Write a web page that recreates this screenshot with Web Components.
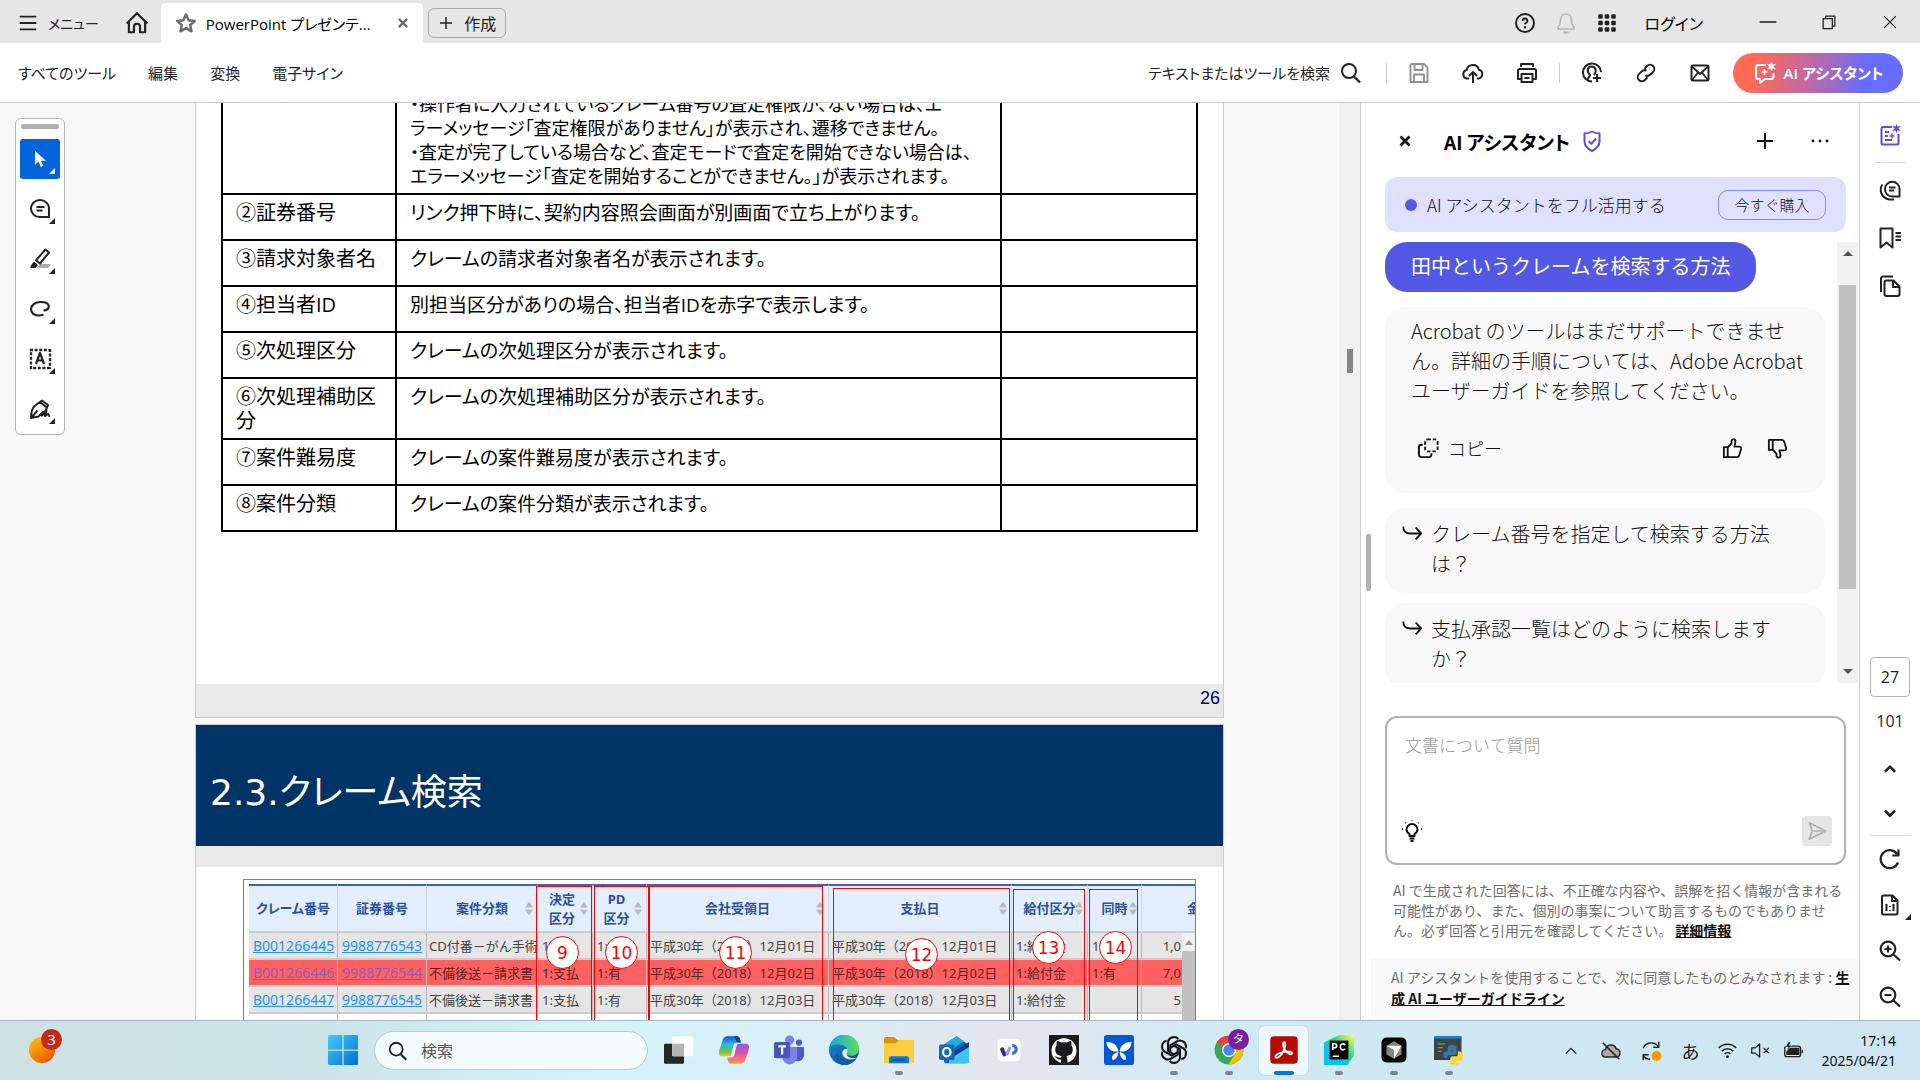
<!DOCTYPE html>
<html lang="ja">
<head>
<meta charset="utf-8">
<title>PowerPoint プレゼンテーション</title>
<style>
html,body{margin:0;height:100%;overflow:hidden}
body{font-family:"Open Sans","Noto Sans CJK JP",sans-serif;font-size:16px;color:#222;background:#fff}
</style>
</head>
<body>
<acro-app></acro-app>
<script>
const ICONS = {
menu:'<path d="M3 5h18M3 12h18M3 19h18" stroke-width="2"/>',
home:'<path d="M2.5 12.5 12 3l9.500 9.500M4.500 11v9.500h4.700v-5a2.800 2.800 0 0 1 5.600 0v5h4.700V11" stroke-width="2"/>',
star:'<path d="m12 3.500 2.600 5.700 6.200.7-4.600 4.200 1.300 6.200L12 17.200l-5.500 3.100 1.300-6.200-4.600-4.200 6.200-.7z" stroke-width="2.500"/>',
x:'<path d="m7.500 7.500 9 9m0-9-9 9" stroke-width="2.600"/>',
plus:'<path d="M12 4v16M4 12h16" stroke-width="2"/>',
help:'<circle cx="12" cy="12" r="9" stroke-width="2"/><path d="M9.700 9.800a2.300 2.300 0 1 1 3.200 2.100c-.7.300-.9.600-.9 1.300" stroke-width="2"/><circle cx="12" cy="16.300" r="1.200" fill="currentColor" stroke="none"/>',
bell:'<path d="M12 3c-3.500 0-5.500 2.500-5.500 6 0 4-1 5.500-2.500 7.500V18h16v-1.500c-1.500-2-2.500-3.500-2.500-7.500 0-3.500-2-6-5.500-6z" stroke-width="1.700"/><path d="M10 20.500a2.200 2.200 0 0 0 4 0" stroke-width="2"/>',
grid:'<path stroke-width="2.600" d="M4.500 4.500h2v2h-2zM11 4.500h2v2h-2zM17.500 4.500h2v2h-2zM4.500 11h2v2h-2zM11 11h2v2h-2zM17.500 11h2v2h-2zM4.500 17.500h2v2h-2zM11 17.500h2v2h-2zM17.500 17.500h2v2h-2z"/>',
min:'<path d="M2 12h20" stroke-width="1.900"/>',
restore:'<path d="M5 8h11v12H5zM8 8V5h11v12h-3" stroke-width="1.500"/>',
close:'<path d="m5 5 14 14m0-14L5 19" stroke-width="1.500"/>',
search:'<circle cx="10" cy="10" r="7" stroke-width="2"/><path d="m15 15.500 6 6" stroke-width="2.400"/>',
save:'<path d="M4.500 3h12.500l3.500 3.500v14.500h-17V4z" stroke-width="1.900"/><path d="M7.500 3v6h8V3M7 21v-7.500h10V21" stroke-width="1.900"/>',
cloud:'<path d="M8 17.500H6.500a4.300 4.300 0 0 1-.8-8.500 6.300 6.300 0 0 1 12.200-.3 4.500 4.500 0 0 1-.4 8.800H16M12 22V11m-4 4 4-4 4 4" stroke-width="2"/>',
print:'<path d="M6 6V3h12v3M6 18H3V9.500A1.500 1.500 0 0 1 4.500 8h15A1.500 1.500 0 0 1 21 9.500V18h-3M6.500 13h11v8h-11zM9.500 17h5M4 8h16" stroke-width="2"/>',
person:'<path d="M21 11a9 9 0 1 0-9 9.500M8 18.500c0-2.500 2-2.500 2-4.500-4-4-2-8.500 1.500-8.500S17.500 9 14 14M17 13v8m-4-4h8" stroke-width="2"/>',
link:'<g transform="rotate(-45 12 12)" stroke-width="2"><path d="M10 16.200H6.200a4.200 4.200 0 0 1 0-8.400H10a4.200 4.200 0 0 1 4 3M14 7.800h3.800a4.200 4.200 0 0 1 0 8.400H14a4.200 4.200 0 0 1-4-3"/></g>',
mail:'<rect x="3.500" y="4.500" width="17" height="15" rx="1.500" stroke-width="2"/><path d="m4 5.500 8 7.500 8-7.500M4 19l6-7.500m10 7.500-6-7.500" stroke-width="1.800"/>',
ai:'<path d="M13 4H5.500A2.500 2.500 0 0 0 3 6.500v9A2.500 2.500 0 0 0 5.500 18H7v4l5-4h6a2.500 2.500 0 0 0 2.500-2.500V12" stroke-width="2"/><path d="m18.500 1 .9 2.800 3.100-.8-2.100 2.500 2.100 2.500-3.100-.8-.9 2.800-.9-2.800-3.100.8 2.100-2.500L14.500 3l3.100.8zM11.500 8l.8 2.200 2.200.8-2.200.8-.8 2.200-.8-2.200-2.200-.8 2.200-.8z" fill="currentColor" stroke-width=".5"/>',
arrow:'<path d="M6 2v17l4.200-4 2.800 6.500 3-1.300-2.800-6.200H19z" fill="currentColor" stroke="none"/>',
note:'<path d="M3 11.500a9 8.500 0 1 1 18 0V20H11.500A8.500 8.500 0 0 1 3 11.500z" stroke-width="2"/><path d="M8.500 10h8M8.500 13.500h6" stroke-width="1.800"/>',
marker:'<path d="M9 21h11l3-4H12z" fill="#a8a8a8" stroke="none"/><path d="M17.500 2.500 21 5.500 12 16.500l-4-3.200z" stroke-width="2"/><path d="m6 14.500 4 3.500-2.500 3H2.500C2 19 4 17 6 14.500z" fill="currentColor" stroke="none"/>',
lasso:'<path d="M15.500 13.500c3.500-.2 5.500-2 5.300-4.300C20.500 6.300 16.500 5 12.500 5 7 5 3 8.300 3 12.200 3 16 6.500 18.500 11 18.500c1.800 0 3.300-.4 4.500-1" stroke-width="2.200"/>',
textbox:'<path d="M2 3h20M22 2v20M22 21H2M3 22V2" stroke-width="2.400" stroke-dasharray="3 1.600"/><path d="M8 17l4-11 4 11M9.200 13.500h5.600" stroke-width="2.200"/>',
sign:'<path d="M14 3.500 20 8l-2.500 6c-3 .5-4.500 3-7 5.500L3 21c0-5 .5-9 3.500-12zM3.500 20.500l6-7M11.500 4.500 18 10M13 19c2-1 3.500-3 5.500-5-1 2.500-2 4-1.500 5s2-2.500 3-2 .5 2.500 2 2" stroke-width="2"/>',
shield:'<path d="M12 2.500c2.500 1.500 5 2 7.500 2v8c0 5-3.500 7.500-7.500 9.500-4-2-7.500-4.500-7.500-9.500v-8c2.500 0 5-.5 7.500-2z" stroke-width="2"/><path d="m8.500 12 2.800 2.800L16 9.500" stroke-width="2"/>',
dots:'<g fill="currentColor" stroke="none"><circle cx="5" cy="12" r="1.400"/><circle cx="12" cy="12" r="1.400"/><circle cx="19" cy="12" r="1.400"/></g>',
copy:'<path d="M6 8H4.500A2.500 2.500 0 0 0 2 10.500v8A2.500 2.500 0 0 0 4.500 21h8a2.500 2.500 0 0 0 2.500-2.500V17" stroke-width="2"/><rect x="8.500" y="2.500" width="13" height="12.500" rx="2.500" stroke-width="2" stroke-dasharray="3.500 2"/>',
up:'<path d="M3 10.500h4V21H3zM7 11l4-4.500V4a2 2 0 0 1 4 1c0 2-.7 3.500-1 5h5a2 2 0 0 1 2 2.500l-2 6.500a2.500 2.500 0 0 1-2.500 2H7" stroke-width="1.900"/>',
down:'<path d="M3 13.500h4V3H3zM7 13l4 4.500V20a2 2 0 0 0 4-1c0-2-.7-3.500-1-5h5a2 2 0 0 0 2-2.500L19 5a2.500 2.500 0 0 0-2.500-2H7" stroke-width="1.900"/>',
reply:'<path d="M2.500 5c0 4.500 2.500 7.500 7 7.500h12M16 6l6 6.500-6 6.500" stroke-width="2"/>',
bulb:'<path d="M9.500 17v-2C7.500 13.800 6.500 12.500 6.500 10.500a5.500 5.500 0 0 1 11 0c0 2-1 3.300-3 4.500v2zM9.500 19.500h5M10.500 22h3" stroke-width="2"/><path d="M12 1.500v.6M5.500 3.500l.5.500M18.500 3.500l-.5.500M2 10h.8M22 10h-.8" stroke-width="2.200"/>',
send:'<path d="M3.500 3 21.500 12 3.500 21l3.500-9zM7 12h14" stroke-width="1.900"/>',
aidoc:'<path d="M14 4H5a1.500 1.500 0 0 0-1.500 1.500V20A1.500 1.500 0 0 0 5 21.500h14a1.500 1.500 0 0 0 1.500-1.500v-9M7 9h4M7 13h3M7 17h7" stroke-width="2"/><path d="m18.500 1 .9 2.800 3.100-.8-2.100 2.500 2.100 2.500-3.100-.8-.9 2.800-.9-2.800-3.100.8 2.100-2.500L14.500 3l3.100.8zM14 10l.8 2.200 2.200.8-2.200.8-.8 2.200-.8-2.200-2.200-.8 2.200-.8z" fill="currentColor" stroke-width=".3"/>',
comments:'<path d="M7 11a7.200 7.200 0 1 1 14.500 0v7.500h-7A7.300 7.300 0 0 1 7 11z" stroke-width="2"/><path d="M11 9.500h6.500M11 12.500h5M4.500 6.500c-3.500 4.500-2 13 6.500 15h5" stroke-width="2"/>',
bookmark:'<path d="M2.500 2.500h12v19l-6-5-6 5z" stroke-width="2"/><path d="M17.500 7H23M17.500 10.500H23M17.500 14H23" stroke-width="1.800"/>',
pages:'<path d="M3 18V4.500A2 2 0 0 1 5 2.500h10" stroke-width="2"/><path d="M8.500 6.500h7l6 6V20a2 2 0 0 1-2 2h-11a2 2 0 0 1-2-2V8.500a2 2 0 0 1 2-2zM15 7v6h6" stroke-width="2"/>',
chevup:'<path d="m6.500 15 5.500-5.500 5.500 5.500" stroke-width="2.800"/>',
chevdown:'<path d="m6.500 9.500 5.500 5.500 5.500-5.500" stroke-width="2.800"/>',
rotate:'<path d="M20 15.500A9 9 0 1 1 19 7M20.500 2.500V8.500h-6" stroke-width="2.200"/>',
actual:'<path d="M5.500 2.500h9l5 5V20a1.500 1.500 0 0 1-1.500 1.500H5.500A1.500 1.500 0 0 1 4 20V4a1.500 1.500 0 0 1 1.500-1.500zM14 3v5h5M7.500 12.500l1-.8V18M14.500 12.500l1-.8V18" stroke-width="2"/><path d="M12 13v1M12 17v1" stroke-width="1.800"/>',
zoomin:'<circle cx="10" cy="10" r="7.300" stroke-width="2.200"/><path d="m15.500 15.500 6.500 6M10 6.500v7M6.500 10h7" stroke-width="2.200"/>',
zoomout:'<circle cx="10" cy="10" r="7.300" stroke-width="2.200"/><path d="m15.500 15.500 6.500 6M6.500 10h7" stroke-width="2.200"/>',
weather:'<defs><linearGradient id="g" x2=".7" y2="1"><stop stop-color="#ffcb05"/><stop offset="1" stop-color="#e8590c"/></linearGradient></defs><circle cx="12" cy="12" r="10.500" fill="url(#g)" stroke="none"/>',
windows:'<defs><linearGradient id="g" x2="1" y2="1"><stop stop-color="#45cdfb"/><stop offset="1" stop-color="#006fd0"/></linearGradient></defs><path d="M0 1a1 1 0 0 1 1-1h10.500v11.500H0zM12.500 0H23a1 1 0 0 1 1 1v10.500H12.500zM0 12.500h11.500V24H1a1 1 0 0 1-1-1zM12.500 12.500H24V23a1 1 0 0 1-1 1H12.500z" fill="url(#g)" stroke="none"/>',
task:'<g stroke="none"><rect x="0" y="7" width="16" height="16" rx="1" fill="#252525"/><rect x="6.500" y="1" width="17" height="16" rx="1" fill="#fbfbfb"/><path d="M6.500 7H16v10H6.500z" fill="#b5b5b5"/></g>',
copilot:'<defs><linearGradient id="a" x2="0" y2="1"><stop stop-color="#1d4fd7"/><stop offset=".4" stop-color="#27b6e8"/><stop offset=".75" stop-color="#6bc04b"/><stop offset="1" stop-color="#f3c715"/></linearGradient><linearGradient id="b" x2="0" y2="1"><stop stop-color="#8d55ea"/><stop offset=".5" stop-color="#e651a4"/><stop offset="1" stop-color="#ff9b45"/></linearGradient></defs><g stroke="none"><path d="M7 1h7c2 0 2.500 1 3 3l.4 2h-3c-2 0-2.500 1-3 3l-1.500 6c-.5 1.500-1 2-3 2H3c-3 0-3.500-2-2.700-5L3 4c.7-2 2-3 4-3z" fill="url(#a)"/><path d="M17 23h-7c-2 0-2.500-1-3-3l-.4-2h3c2 0 2.500-1 3-3L14 9c.5-1.500 1-2 3-2h4c3 0 3.500 2 2.700 5L21 20c-.7 2-2 3-4 3z" fill="url(#b)"/><path d="M14 1c2 0 2.500 1 3 3l.4 2h-3L12 1z" fill="#183fae"/></g>',
teams:'<g stroke="none"><circle cx="12.500" cy="4" r="3.700" fill="#7b83eb"/><circle cx="20" cy="6" r="2.500" fill="#5059c9"/><path d="M15 9.500h9V16a5 5 0 0 1-7 4.500z" fill="#5059c9"/><path d="M6 9.500h12.500V17a6 6 0 0 1-12 1z" fill="#7b83eb"/><rect y="5.500" width="13" height="13" rx="1.500" fill="#4b53bc"/></g><path d="M3.500 9h6M6.500 9v6.500" stroke="#fff" stroke-width="1.800"/>',
edge:'<defs><linearGradient id="a"><stop stop-color="#16a7e5"/><stop offset="1" stop-color="#60dc59"/></linearGradient><linearGradient id="b" x2=".8" y2="1"><stop stop-color="#1392dc"/><stop offset="1" stop-color="#114b91"/></linearGradient></defs><g stroke="none"><circle cx="12" cy="12" r="12" fill="url(#b)"/><path d="M.5 9.500C2 3.500 6.500 0 12 0c7 0 12 5 12 10.500 0 4-3 6-6.200 6-2.500 0-4-.8-3.600-2C16 11 13 8 9 7.700 5 7.400 2 8 .5 9.500z" fill="url(#a)"/><path d="M22 18.500c-2 3.500-5.500 5.500-10 5.500C7 24 4 19 6 14.500 8 17 9 21 22 18.500z" fill="#155aa5"/><path d="M15 11.500c-4-1.500-6 3.500-2.500 6.500 3 2.500 8 1.500 9.500.2-3.500 1-8.500-.7-7.800-3.700z" fill="#dff4fb"/></g>',
folder:'<g stroke="none"><path d="M0 3a1.500 1.500 0 0 1 1.500-1.500H8L11 4h11v5H0z" fill="#d99309"/><path d="M0 6.500h9.500L12 4h11a1 1 0 0 1 1 1v16.500a1 1 0 0 1-1 1H1a1 1 0 0 1-1-1z" fill="#ffcc3d"/><path d="M4 22.500v-4A1.500 1.500 0 0 1 5.500 17h13a1.500 1.500 0 0 1 1.500 1.500v4z" fill="#0f78d4"/></g><path d="M7 20h10" stroke="#0a4a86" stroke-width="1.200"/>',
outlook:'<g stroke="none"><path d="M4 8 14 1l10 7v13a1.500 1.500 0 0 1-1.500 1.500h-17A1.500 1.500 0 0 1 4 21z" fill="#1066b8"/><path d="M5 6.500 14 1l6 4-12 8z" fill="#27a8ea"/><path d="m24 9-16 10v3.500h14.500A1.500 1.500 0 0 0 24 21z" fill="#37c6f5"/><path d="m24 5.500v4L12 17v-4z" fill="#0a3e90"/><rect y="7.500" width="12.500" height="12.500" rx="1.500" fill="#0f6cbd"/></g><ellipse cx="6.200" cy="13.700" rx="3" ry="3.400" stroke="#fff" stroke-width="1.800"/>',
app:'<rect x="2.500" y="2.500" width="19" height="19" rx="4" fill="#fff" stroke="#ddd" stroke-width=".5"/><path d="m6.500 11.500 1.800 4" stroke="#28309b" stroke-width="3.200" stroke-linecap="round"/><path d="m10.500 15 2-4.500" stroke="#9b9cf1" stroke-width="2.600" stroke-linecap="round"/><path d="M14.500 8.200a3.200 3.200 0 1 1 0 6.400" stroke="#3970f0" stroke-width="2.600"/>',
github:'<g stroke="none"><path d="M0 0h24v24H0z" fill="#1b1b1f"/><circle cx="12" cy="12.500" r="10" fill="#fff"/><path d="M9.500 22.500v-3c-3 .5-3.500-1.500-5-2.500 1.500-.3 2.500 1.500 5 1l.6-1.200C6.500 16.200 5 14.500 5 11.500 5 10 5.500 9 6.200 8c-.3-1.200-.2-2.300.2-3.300 1.500 0 2.500.8 3.300 1.300a10 10 0 0 1 4.600 0c.8-.5 1.800-1.300 3.300-1.300.4 1 .5 2.100.2 3.300.7 1 1.200 2 1.200 3.500 0 3-1.500 4.700-5.100 5.300.5.500.8 1.200.8 2.200v3.500z" fill="#1b1b1f"/></g>',
butterfly:'<g stroke="none"><rect width="24" height="24" rx="2" fill="#0657d5"/><path d="M11.500 13C7 14 2 11 2 5.500c5 0 9 2.500 9.500 7.500zM12.500 13c4.500 1 9.500-2 9.500-7.500-5 0-9 2.500-9.500 7.500zM11.500 13.500c-.5 4-2 6-4.500 6.500-2-2.500 1-5.500 4.500-6.500zM12.500 13.500c.5 4 2 6 4.500 6.500 2-2.500-1-5.500-4.500-6.500z" fill="#fff"/></g>',
openai:'<g stroke="#111" stroke-width="1.600"><path d="M15.500 3.200A4.800 4.800 0 0 0 7.200 6.500v6.200l4.800 2.800"/><g transform="rotate(60 12 12)"><path d="M15.500 3.200A4.800 4.800 0 0 0 7.200 6.500v6.200l4.800 2.800"/></g><g transform="rotate(120 12 12)"><path d="M15.500 3.200A4.800 4.800 0 0 0 7.200 6.500v6.200l4.800 2.800"/></g><g transform="rotate(180 12 12)"><path d="M15.500 3.200A4.800 4.800 0 0 0 7.200 6.500v6.200l4.800 2.800"/></g><g transform="rotate(240 12 12)"><path d="M15.500 3.200A4.800 4.800 0 0 0 7.200 6.500v6.200l4.800 2.800"/></g><g transform="rotate(300 12 12)"><path d="M15.500 3.200A4.800 4.800 0 0 0 7.200 6.500v6.200l4.800 2.800"/></g></g>',
chrome:'<g stroke="none"><circle cx="12" cy="12" r="11.500" fill="#34a853"/><path d="M12 12 2 6.200A11.500 11.500 0 0 1 22 6.500H12z" fill="#ea4335"/><path d="M12 6.500h10A11.500 11.500 0 0 1 11.500 23.500L17 14.700z" fill="#fbbc04"/><circle cx="12" cy="12" r="5.600" fill="#fff"/><circle cx="12" cy="12" r="4.500" fill="#4285f4"/></g>',
acrobat:'<rect x="1" y="1" width="22" height="22" rx="3" fill="#b30b00" stroke="none"/><path d="M5.500 18c-1.500-1 1-3.500 6.500-4.500 3.500-.6 6.700-.2 6.500 1.200-.3 1.600-3.500.3-5.500-2.200-2-2.700-2.300-6.500-1-6.800 1.500-.2 1.500 3.300-.5 7.300-1.700 3.300-4.500 6-6 5z" stroke="#fff" stroke-width="1.400"/>',
pycharm:'<defs><linearGradient id="g" x1="1" x2="0" y2="1"><stop offset=".05" stop-color="#fcf84a"/><stop offset=".4" stop-color="#21d789"/><stop offset=".7" stop-color="#07c3f2"/></linearGradient></defs><path d="M0 6 12 0h12v16l-5 8H0z" fill="url(#g)" stroke="none"/><path d="M4.500 4.500h15v15h-15z" fill="#000" stroke="none"/><path d="M7 12V7h1.500a1.500 1.500 0 0 1 0 3.200H7M17 8c-1.500-1.500-4-1-4 1.500s2.500 3 4 1.500M7 17h5" stroke="#fff" stroke-width="1.300"/>',
cursor:'<rect x="2" y="2" width="20" height="20" rx="4" fill="#070707" stroke="none"/><path d="m12 5 6 3.500v7L12 19l-6-3.500v-7z" fill="#858585" stroke="none"/><path d="M6 8.500h12L12 19v-7z" fill="#f1f1f1" stroke="none"/>',
python:'<g stroke="none"><path d="M0 1h22v19H0z" fill="#3f4347"/><path d="M0 1h22v2H0z" fill="#1681d9"/><path d="M11 14v-4q0-2 3.500-2t3.500 2v4q0 2-2 2h-4q-1.500 0-1.500 3-3-1-3-3.500T10 13h5v-1z" fill="#3776ab"/><path d="M19 13q4 0 4 4t-4 4h-2v1h3q0 2-3.500 2T13 22v-3q0-2 2-2h3q1.500 0 1-4z" fill="#ffd43b"/></g><path d="M3 7h6M3 10h4M3 13h3" stroke="#4caf50" stroke-width="1"/>',
traychev:'<path d="m5 15.500 7-7 7 7" stroke-width="1.800"/>',
cloudoff:'<path d="M6.500 18.500c-6 0-5.500-7.500-.5-8C7 4 16 4 17.500 9.500c6 .5 5.500 9 0 9z" fill="#aaa" stroke-width="1.500"/><path d="m3 3 18 18" stroke-width="1.800"/>',
sync:'<path d="M3.500 9C6 2 16 1 20 7.500M20.500 2v6h-6M3.500 22v-6h6M3.500 16.500C5 19.500 8 21 11 21" stroke-width="1.600"/><circle cx="18" cy="17.500" r="5.500" fill="#ff9800" stroke="none"/>',
wifi:'<path d="M2 9a14 14 0 0 1 20 0M5.500 12.700a9 9 0 0 1 13 0M8.700 16a4.700 4.700 0 0 1 6.600 0" stroke-width="1.700"/><circle cx="12" cy="19" r="1.600" fill="currentColor" stroke="none"/>',
mute:'<path d="M2 9h4l5-4.500v15L6 15H2zM15.500 9l6 6m0-6-6 6" stroke-width="1.500"/>',
battery:'<rect x="2" y="7" width="18" height="12" rx="2.500" stroke-width="1.500"/><path d="M7 9.500h11v7H4.500V13zM22 11v4" fill="currentColor" stroke-width="1.500"/><path d="M6 2 3 8h3l-2 5 6-7H7l2-4z" fill="currentColor" stroke="#cfe6ef" stroke-width=".6"/>'
};
const BOX = '*{box-sizing:border-box}button,input,textarea{font:inherit;font-feature-settings:inherit;color:inherit;margin:0}button{display:flex;align-items:center;justify-content:center;border:0;background:none;padding:0}button,a{cursor:pointer}';
function element(name, html, ready) {
  const t = document.createElement('template');
  t.innerHTML = html.replace('<style>', '<style>' + BOX);
  customElements.define(name, class extends HTMLElement {
    connectedCallback() {
      if (this.shadowRoot) return;
      this.attachShadow({mode:'open'}).append(t.content.cloneNode(true));
      if (ready) ready.call(this, this.shadowRoot);
    }
  });
}
element('ui-icon', `<style>:host{display:block;flex:none;width:var(--s,24px);height:var(--s,24px)}svg{display:block;width:100%;height:100%;overflow:visible}</style><svg viewBox="0 0 24 24" fill="none" stroke="currentColor" stroke-linejoin="round" aria-hidden="true"></svg>`,
  function(r){ r.querySelector('svg').innerHTML = ICONS[this.getAttribute('name')] || ''; });

element('title-bar', `<style>
:host{display:flex;height:43px;background:#e6e6e6;font-feature-settings:"palt";align-items:stretch}
.menu{padding:2px 14px 0 17px;gap:9px;--s:22px;font-size:14px}
.home{width:48px;--s:26px;padding-top:3px}
.tab{display:flex;align-items:center;width:262px;margin:3px 5px 0 0;padding:0 9px 0 13px;gap:8px;background:#fff;border-radius:5px 5px 0 0;color:#000;font-size:15px}
.tab ui-icon{color:#6b6b6b}.tab span{flex:1;white-space:nowrap}.tab button{--s:22px}
.new{align-self:center;height:30px;width:78px;margin-top:3px;border:1px solid #aaa;border-radius:6px;gap:9px;--s:18px}
.right{margin-left:auto;display:flex;align-items:center}
.ic{width:41px;height:43px;--s:24px;padding-top:3px}.bell{color:#b8b8b8}
.login{font-size:16px;padding:3px 34px 0 17px;color:#000}
.win{width:61px;height:41px;--s:20px}
</style>
<button class="menu"><ui-icon name="menu"></ui-icon>メニュー</button>
<button class="home" aria-label="ホーム"><ui-icon name="home"></ui-icon></button>
<div class="tab"><ui-icon name="star"></ui-icon><span>PowerPoint プレゼンテ...</span><button aria-label="閉じる"><ui-icon name="x"></ui-icon></button></div>
<button class="new"><ui-icon name="plus"></ui-icon>作成</button>
<div class="right"><button class="ic" aria-label="ヘルプ"><ui-icon name="help"></ui-icon></button><button class="ic bell" aria-label="通知"><ui-icon name="bell"></ui-icon></button><button class="ic" aria-label="アプリ"><ui-icon name="grid"></ui-icon></button><button class="login">ログイン</button>
<button class="win" aria-label="最小化"><ui-icon name="min"></ui-icon></button><button class="win" aria-label="元に戻す"><ui-icon name="restore"></ui-icon></button><button class="win" aria-label="閉じる"><ui-icon name="close"></ui-icon></button></div>`);

element('tool-bar', `<style>
:host{display:flex;height:60px;background:#fff;border-bottom:1px solid #ccc;align-items:center;padding:0 17px 0 18px;font-feature-settings:"palt"}
nav{display:flex;gap:32px}nav button,.find{font-size:15px;white-space:nowrap}
.find{margin-left:auto;gap:9px;margin-right:18px}
.ic{width:54px;height:40px}.off{color:#909090}
i{width:1px;height:20px;background:#ccc;margin:0 5px}
.ai{width:170px;height:40px;margin-left:6px;border-radius:20px;color:#fff;font-size:15px;font-weight:600;gap:7px;background:linear-gradient(100deg,#ff6b55 12%,#c268a0 45%,#666dff 78%)}
</style>
<nav><button>すべてのツール</button><button>編集</button><button>変換</button><button>電子サイン</button></nav>
<button class="find">テキストまたはツールを検索<ui-icon name="search"></ui-icon></button><i></i>
<button class="ic off" aria-label="保存"><ui-icon name="save"></ui-icon></button><button class="ic" aria-label="アップロード"><ui-icon name="cloud"></ui-icon></button><button class="ic" aria-label="印刷"><ui-icon name="print"></ui-icon></button><i></i>
<button class="ic" aria-label="共有"><ui-icon name="person"></ui-icon></button><button class="ic" aria-label="リンク"><ui-icon name="link"></ui-icon></button><button class="ic" aria-label="メール"><ui-icon name="mail"></ui-icon></button>
<button class="ai"><ui-icon name="ai"></ui-icon>AI アシスタント</button>`);

element('tool-dock', `<style>
:host{display:block;flex:none;width:80px;padding:15px 0 0 15px}
.box{width:50px;background:#fff;border:1px solid #b4b4b4;border-radius:6px;padding:5px 4px;display:flex;flex-direction:column;gap:10px}
.grip{height:5px;border-radius:2px;background:#b1b1b1;margin:0 1px}
button{height:40px;width:40px;border-radius:3px;position:relative;background:none}
button::after{content:"";position:absolute;right:5px;bottom:5px;border-left:6px solid transparent;border-bottom:6px solid currentColor}
.on{background:#0265dc;color:#fff;--s:20px}
</style><div class="box"><div class="grip"></div><button class="on" aria-label="選択"><ui-icon name="arrow"></ui-icon></button><button aria-label="コメント"><ui-icon name="note"></ui-icon></button><button aria-label="ハイライト"><ui-icon name="marker"></ui-icon></button><button aria-label="描画"><ui-icon name="lasso"></ui-icon></button><button aria-label="テキスト"><ui-icon name="textbox"></ui-icon></button><button aria-label="署名"><ui-icon name="sign"></ui-icon></button></div>`);

element('pdf-page', `<style>:host{display:block;flex:none;width:1029px;background:#fff;border:1px solid #ccc;overflow:hidden}</style><slot></slot>`);

element('spec-table', `<style>
:host{display:block;padding:0 25px 152px 25px}
table{border-collapse:collapse;table-layout:fixed;width:977px;color:#000;font-size:20px;line-height:24px;font-feature-settings:"palt"}
td{border:2px solid #000;padding:6px 0 14px 13px;vertical-align:top;white-space:nowrap}
td:nth-child(2){font-size:19px}
tr:first-child td{padding-bottom:5px}tr:first-child td:nth-child(2){font-size:18px}
tr.two td{padding-bottom:5px}
.a{width:174px}.b{width:605px}
</style><table><colgroup><col class="a"><col class="b"><col></colgroup><tbody>
<tr><td></td><td>・操作者に入力されているクレーム番号の査定権限が、ない場合は、エ<br>ラーメッセージ「査定権限がありません」が表示され、遷移できません。<br>・査定が完了している場合など、査定モードで査定を開始できない場合は、<br>エラーメッセージ「査定を開始することができません。」が表示されます。</td><td></td></tr>
<tr><td>②証券番号</td><td>リンク押下時に、契約内容照会画面が別画面で立ち上がります。</td><td></td></tr>
<tr><td>③請求対象者名</td><td>クレームの請求者対象者名が表示されます。</td><td></td></tr>
<tr><td>④担当者ID</td><td>別担当区分がありの場合、担当者IDを赤字で表示します。</td><td></td></tr>
<tr><td>⑤次処理区分</td><td>クレームの次処理区分が表示されます。</td><td></td></tr>
<tr class="two"><td>⑥次処理補助区<br>分</td><td>クレームの次処理補助区分が表示されます。</td><td></td></tr>
<tr><td>⑦案件難易度</td><td>クレームの案件難易度が表示されます。</td><td></td></tr>
<tr><td>⑧案件分類</td><td>クレームの案件分類が表示されます。</td><td></td></tr>
</tbody></table>`);

element('claim-shot', `<style>
:host{display:block;position:relative;margin:12px 0 0 47px;width:953px;height:300px;border:1px solid #808080;border-bottom:0;padding:4px 0 0 5px;overflow:hidden;font-family:"Noto Sans","Noto Sans CJK JP",sans-serif;font-size:13px;color:#444}
table{border-collapse:separate;border-spacing:0;table-layout:fixed;width:952px}
th{height:49px;padding:0;background:#e3efff;border-top:2px solid #3c64b4;border-right:1px solid #d4d8e0;border-bottom:2px solid #ccc;color:#2b50a0;font-weight:700;line-height:19px;white-space:nowrap;font-feature-settings:"palt"}
th>div{display:flex;align-items:center;justify-content:center;position:relative}
.s::after{content:"";position:absolute;right:4px;width:8px;height:14px;background:#bbb;clip-path:polygon(50% 0,100% 42%,0 42%,0 58%,100% 58%,50% 100%,0 58%,0 42%)}
.n{padding-right:6px;text-align:center}
td{height:27px;padding:0 0 0 4px;background:#e5e5e5;border-right:1px solid #bbb;border-bottom:2px solid #ccc;white-space:nowrap;line-height:20px}
td:nth-child(3){padding-left:2px}
.d{padding-left:3px}.red td{background:#ff6161;color:#5c2323}.w td{background:#fff}
th:last-child>div{justify-content:flex-end}td:last-child{text-align:right;padding-right:19px}
a{color:#2490f5;text-decoration:underline;font-size:14px}.red a{color:#9459bd}
.sb{position:absolute;right:0;top:53px;bottom:0;width:13px;background:linear-gradient(#f0f0f0 18px,#c1c1c1 18px)}
.sb::after{content:"";position:absolute;left:3px;top:7px;border:4px solid transparent;border-top:0;border-bottom:5px solid #999}
.r{position:absolute;border:1px solid #f00;bottom:-4px}
.c{position:absolute;width:33px;height:33px;border:1px solid #f00;border-radius:50%;background:#fff;color:#f00;font:17px "DejaVu Sans",sans-serif;display:flex;align-items:center;justify-content:center}
</style><table><colgroup><col style="width:89px"><col style="width:89px"><col style="width:111px"><col style="width:55px"><col style="width:54px"><col style="width:182px"><col style="width:183px"><col style="width:76px"><col style="width:54px"><col style="width:59px"></colgroup>
<thead><tr><th><div>クレーム番号</div></th><th><div>証券番号</div></th><th><div class="s">案件分類</div></th><th><div class="s"><span class="n">決定<br>区分</span></div></th><th><div class="s"><span class="n">PD<br>区分</span></div></th><th><div class="s">会社受領日</div></th><th><div class="s">支払日</div></th><th><div class="s">給付区分</div></th><th><div class="s">同時</div></th><th><div>金</div></th></tr></thead>
<tbody>
<tr><td><a href="#a">B001266445</a></td><td><a href="#a">9988776543</a></td><td>CD付番－がん手術</td><td>1:支払</td><td>1:有</td><td class="d">平成30年（2018）12月01日</td><td class="d">平成30年（2018）12月01日</td><td>1:給付金</td><td>1:有</td><td>1,0</td></tr>
<tr class="red"><td><a href="#a">B001266446</a></td><td><a href="#a">9988776544</a></td><td>不備後送－請求書</td><td>1:支払</td><td>1:有</td><td class="d">平成30年（2018）12月02日</td><td class="d">平成30年（2018）12月02日</td><td>1:給付金</td><td>1:有</td><td>7,0</td></tr>
<tr><td><a href="#a">B001266447</a></td><td><a href="#a">9988776545</a></td><td>不備後送－請求書</td><td>1:支払</td><td>1:有</td><td class="d">平成30年（2018）12月03日</td><td class="d">平成30年（2018）12月03日</td><td>1:給付金</td><td></td><td>5</td></tr>
<tr class="w"><td></td><td></td><td></td><td></td><td></td><td></td><td></td><td></td><td></td><td></td></tr>
</tbody></table><div class="sb"></div><div id="marks"></div>`, function(r){
  const m = r.getElementById('marks');
  [[292,6,56,9,302,56],[350,6,55,10,361,56],[405,6,174,11,475,56],[589,8,177,12,661,58],[769,9,72,13,788,51],[845,9,49,14,855,51]].forEach(([x,y,w,n,cx,cy])=>{
    m.insertAdjacentHTML('beforeend', `<div class="r" style="left:${x}px;top:${y}px;width:${w}px"></div>`);
    m.insertAdjacentHTML('beforeend', `<div class="c" style="left:${cx}px;top:${cy}px">${n}</div>`);
  });
});

element('pdf-viewer', `<style>
:host{display:flex;flex:1;min-width:0;background:#f8f8f8;overflow:hidden}
.scroll{flex:1;display:flex;flex-direction:column;align-items:center;gap:6px;overflow:hidden;min-width:0;color:#000}
pdf-page:first-child{margin-top:-20px}
.foot{background:#e9e9e9;height:33px;text-align:right;padding:2px 3px 0 0;font:18px/24px "Liberation Sans",sans-serif;color:#000080}
h1{margin:0;height:121px;background:#036;color:#fff;font:400 36px/107px "DejaVu Sans","Noto Sans CJK JP",sans-serif;font-feature-settings:"palt";padding:14px 0 0 14px}
.band{height:21px;background:#e9e9e9}
.bar{flex:none;width:21px;background:#f0f0f0;display:flex;justify-content:center;padding-top:246px}
.bar i{width:6px;height:24px;background:#858585}
</style><tool-dock></tool-dock><div class="scroll"><pdf-page><spec-table></spec-table><div class="foot">26</div></pdf-page><pdf-page><h1>2.3.クレーム検索</h1><div class="band"></div><claim-shot></claim-shot></pdf-page></div><div class="bar"><i></i></div>`);

element('suggest-item', `<style>:host{display:block}button{width:100%;display:flex;justify-content:flex-start;align-items:flex-start;gap:8px;text-align:left;background:#f8f8f8;border-radius:20px;padding:11px 40px 14px 16px;line-height:30px;font-size:20px;--s:22px}ui-icon{margin-top:3px}</style><button><ui-icon name="reply"></ui-icon><span><slot></slot></span></button>`);

element('ai-panel', `<style>
:host{display:flex;flex:none;width:500px;border-left:1px solid #ccc;border-right:1px solid #ccc;background:#fff;font-family:"Noto Sans CJK JP",sans-serif;font-weight:300;color:#111}
.grip{width:5px;height:57px;border-radius:2px;background:#b1b1b1;margin:431px 0 0 5px;flex:none}
.main{flex:1;min-width:0;display:flex;flex-direction:column;padding:0 1px 1px 0}
header{display:flex;align-items:center;height:74px;padding:2px 26px 0 22px;flex:none}
header button{--s:24px}h2{margin:0 10px 0 27px;font-size:19px;font-weight:700;font-feature-settings:"palt";color:#000}
.sh{color:#5c4fd6}.more{margin-left:31px}.add{margin-left:auto}
.promo{display:flex;align-items:center;height:55px;margin:0 12px 10px 14px;padding:0 20px;background:#e0e0ff;border-radius:12px;font-size:17px;flex:none}
.promo i{width:12px;height:12px;border-radius:50%;background:#5258e4;margin-right:10px}
.promo button{margin-left:auto;width:108px;height:30px;border:1px solid #8489fd;border-radius:10px;font-size:15px}
.chat{height:441px;flex:none;display:flex;overflow:hidden}
.log{flex:1;overflow:hidden;padding:0 12px 0 14px;display:flex;flex-direction:column;font-size:20px;line-height:30px}
.log>*{flex:none}
.q{align-self:flex-start;background:#5258e4;color:#fff;border-radius:22px;padding:9px 26px 11px;font-weight:400;margin-bottom:15px}
.ans{background:#f8f8f8;border-radius:20px;height:186px;padding:9px 26px;margin-bottom:15px}
.ans p{margin:0;white-space:nowrap}
.act{display:flex;align-items:center;margin:22px 10px 0 6px;height:40px;font-size:18px}
.act ui-icon{--s:23px}.act button{gap:8px}.act .u{margin-left:auto;margin-right:22px}.act .v,.act .u{--s:22px}
suggest-item{margin-bottom:10px}
.bar{width:21px;background:#f1f1f1;display:flex;flex-direction:column;align-items:center;justify-content:space-between;padding:9px 0}
.bar i{width:0;border:5px solid transparent;border-top:0;border-bottom-color:#505050}
.bar b{width:17px;height:304px;background:#c1c1c1;margin:-52px 0 0}
.bar u{width:0;border:5px solid transparent;border-bottom:0;border-top-color:#505050}
.ask{display:flex;flex-direction:column;margin:33px 12px 0 14px;border:2px solid #b1b1b1;border-radius:12px;height:149px;flex:none;padding:10px 12px 17px 13px}
textarea{flex:1;border:0;outline:0;resize:none;padding:2px 0 2px 5px;font-size:17px;line-height:30px;background:none;min-height:0}
textarea::placeholder{color:#999;opacity:1}
.ask div{display:flex;justify-content:space-between;align-items:center}
.send{width:30px;height:30px;border-radius:4px;background:#e6e6e6;color:#b1b1b1;--s:22px}
.note{margin:0 0 0 22px;padding-top:15px;font-size:14px;line-height:20px;color:#6e6e6e;white-space:nowrap;font-weight:400;height:93px;flex:none}
.terms{margin:0;background:#f8f8f8;padding:9px 0 9px 20px;font-size:14px;line-height:21px;color:#6e6e6e;font-weight:400;white-space:nowrap;flex:none}
.note a,.terms a{color:#111;font-weight:700;text-decoration:underline}
</style><div class="grip"></div><div class="main">
<header><button aria-label="閉じる"><ui-icon name="x"></ui-icon></button><h2>AI アシスタント</h2><ui-icon class="sh" name="shield"></ui-icon><button class="add" aria-label="新規"><ui-icon name="plus"></ui-icon></button><button class="more" aria-label="その他"><ui-icon name="dots"></ui-icon></button></header>
<div class="promo"><i></i>AI アシスタントをフル活用する<button>今すぐ購入</button></div>
<div class="chat"><div class="log"><div class="q">田中というクレームを検索する方法</div>
<div class="ans"><p>Acrobat のツールはまだサポートできませ<br>ん。詳細の手順については、Adobe Acrobat<br>ユーザーガイドを参照してください。</p><div class="act"><button><ui-icon name="copy"></ui-icon>コピー</button><button class="u" aria-label="良い"><ui-icon name="up"></ui-icon></button><button class="v" aria-label="悪い"><ui-icon name="down"></ui-icon></button></div></div>
<suggest-item>クレーム番号を指定して検索する方法<br>は？</suggest-item><suggest-item>支払承認一覧はどのように検索します<br>か？</suggest-item></div><div class="bar"><i></i><b></b><u></u></div></div>
<div class="ask"><textarea aria-label="文書について質問" placeholder="文書について質問"></textarea><div><button aria-label="ヒント"><ui-icon name="bulb"></ui-icon></button><button class="send" aria-label="送信"><ui-icon name="send"></ui-icon></button></div></div>
<p class="note">AI で生成された回答には、不正確な内容や、誤解を招く情報が含まれる<br>可能性があり、また、個別の事案について助言するものでもありませ<br>ん。必ず回答と引用元を確認してください。 <a href="#info">詳細情報</a></p>
<p class="terms">AI アシスタントを使用することで、次に同意したものとみなされます : <a href="#terms">生<br>成 AI ユーザーガイドライン</a></p></div>`);

element('side-rail', `<style>
:host{display:flex;flex-direction:column;align-items:center;flex:none;width:60px;background:#fff;padding-top:8px;font-size:16px}
button{width:40px;height:48px;flex:none}.p{color:#5c4fd6}
hr{border:0;height:1px;background:#dcdcdc;width:30px;margin:3px 0 3px;flex:none}.w{width:41px;margin:0}
input{width:40px;height:40px;border:1px solid #b1b1b1;border-radius:4px;text-align:center;padding:0;flex:none;background:#fff}
.gap{flex:1}.n{line-height:24px;margin:12px 0 14px}.s{height:44px;--s:22px}.z{height:46px}
.m{position:relative}.m::after{content:"";position:absolute;right:-1px;bottom:8px;border-left:6px solid transparent;border-bottom:6px solid currentColor}
</style><button class="p" aria-label="AI"><ui-icon name="aidoc"></ui-icon></button><hr><button aria-label="コメント"><ui-icon name="comments"></ui-icon></button><button aria-label="しおり"><ui-icon name="bookmark"></ui-icon></button><button aria-label="ページ"><ui-icon name="pages"></ui-icon></button><div class="gap"></div>
<input aria-label="ページ番号" value="27"><div class="n">101</div><button class="s" aria-label="前へ"><ui-icon name="chevup"></ui-icon></button><button class="s" aria-label="次へ"><ui-icon name="chevdown"></ui-icon></button><hr class="w"><button class="z" aria-label="回転"><ui-icon name="rotate"></ui-icon></button><button class="z m" aria-label="実寸"><ui-icon name="actual"></ui-icon></button><button class="z" aria-label="拡大"><ui-icon name="zoomin"></ui-icon></button><button class="z" aria-label="縮小"><ui-icon name="zoomout"></ui-icon></button>`);

element('task-app', `<style>:host{display:block;flex:none;width:55px;height:60px;padding:5px 3px}button{width:49px;height:49px;border-radius:5px;position:relative;--s:30px}
:host([on]) button{background:#eef7fb;box-shadow:0 0 1px #999}
:host([run]) button::after,:host([on]) button::after{content:"";position:absolute;bottom:0;left:50%;width:8px;height:4px;margin-left:-4px;border-radius:2px;background:#7c8790}
:host([on]) button::after{width:20px;margin-left:-10px;background:#0078d4}
::slotted(b){position:absolute;right:4px;top:3px;width:21px;height:21px;border-radius:50%;background:var(--b,#7b1fa2);color:#fff;font-size:11px;line-height:20px;text-align:center;font-weight:400}</style><button><ui-icon></ui-icon><slot></slot></button>`,
 function(r){
  const i = document.createElement('ui-icon'); i.setAttribute('name', this.getAttribute('icon')); r.querySelector('ui-icon').replaceWith(i); r.querySelector('button').setAttribute('aria-label', this.getAttribute('icon')); });

element('task-bar', `<style>
:host{display:flex;align-items:center;height:60px;border-top:1px solid #a9b8bf;background:linear-gradient(90deg,#cfe2e2 0,#cbe4e9 17%,#d4f4f9 32%,#d8f0f7 40%,#e5e4ef 53%,#cfeaf2 64%,#cfe6f0 100%)}
.wx{--b:#c42b1c;margin:0 246px 0 14px}.wx b{font-size:15px}
label{display:flex;align-items:center;gap:12px;width:274px;height:39px;border-radius:20px;border:1px solid #b9ccd2;background:#f3fafc;padding:0 12px;margin:0 3px 0 4px}
input{border:0;background:none;outline:0;flex:1;min-width:0;padding:0}input::placeholder{color:#555;opacity:1}
.tray{margin-left:auto;display:flex;align-items:center;padding-right:24px;--s:22px}
.tray button{width:40px;height:40px;font-size:18px}.tray .g{width:100px;justify-content:space-around;--s:21px}
.tray .clock{width:auto;flex-direction:column;align-items:flex-end;font:14px/20px "Noto Sans",sans-serif;text-align:right;margin-left:11px;color:#111}
</style><task-app class="wx" icon="weather"><b>3</b></task-app>
<task-app icon="windows"></task-app>
<label><ui-icon name="search" style="--s:22px"></ui-icon><input placeholder="検索" aria-label="検索"></label>
<task-app icon="task"></task-app><task-app icon="copilot"></task-app><task-app icon="teams"></task-app><task-app icon="edge"></task-app><task-app icon="folder" run></task-app><task-app icon="outlook"></task-app><task-app icon="app"></task-app><task-app icon="github"></task-app><task-app icon="butterfly"></task-app><task-app icon="openai" run></task-app><task-app icon="chrome" run><b>タ</b></task-app><task-app icon="acrobat" on></task-app><task-app icon="pycharm" run></task-app><task-app icon="cursor" run></task-app><task-app icon="python" run></task-app>
<div class="tray"><button aria-label="隠れているアイコン"><ui-icon name="traychev" style="--s:18px"></ui-icon></button><button aria-label="クラウド"><ui-icon name="cloudoff"></ui-icon></button><button aria-label="更新"><ui-icon name="sync"></ui-icon></button><button>あ</button><button class="g" aria-label="ネットワーク"><ui-icon name="wifi"></ui-icon><ui-icon name="mute"></ui-icon><ui-icon name="battery"></ui-icon></button><button class="clock"><span>17:14</span><span>2025/04/21</span></button></div>`);

element('acro-app', `<style>:host{display:flex;flex-direction:column;height:100vh}main{flex:1;min-height:0;display:flex;background:#f8f8f8}</style><title-bar></title-bar><tool-bar></tool-bar><main><pdf-viewer></pdf-viewer><ai-panel></ai-panel><side-rail></side-rail></main><task-bar></task-bar>`);
</script>
</body>
</html>
